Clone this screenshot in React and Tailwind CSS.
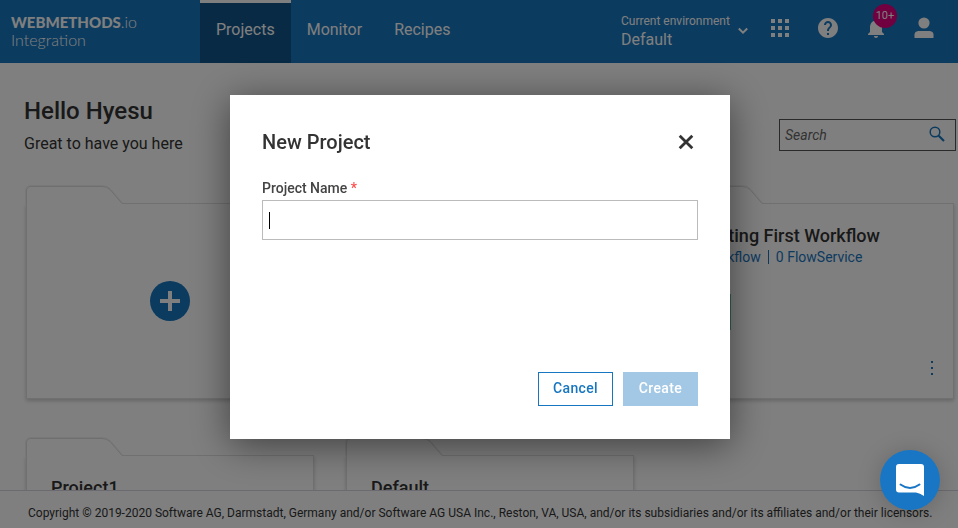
import React from "react";

const projects = [
  { name: "Creating First Workflow", workflows: "1 Workflow", services: "0 FlowService" },
  { name: "Project1" },
  { name: "Default" },
];

function FolderCard({ children }) {
  return (
    <li className="flex h-[213px] w-72 flex-col">
      <svg className="relative -mb-px block shrink-0 overflow-visible" width="97" height="18" viewBox="0 0 97 18" aria-hidden="true">
        <path d="M-.5 18V5Q-.5 -.5 5 -.5H76Q82 -.5 85 3.500L97 17.500" fill="none" stroke="#f0f0f0" />
        <path d="M0 18V5Q0 .5 5 .5H76Q81 .5 84 3.500L96 17.500V18Z" fill="#fff" />
        <path d="M.5 18V5Q.5 .5 5 .5H76Q81 .5 84 3.500L96 17.500" fill="none" stroke="#dedede" />
      </svg>
      <div className="flex flex-1 flex-col border border-[#e0e0e0] bg-white px-6 py-5 shadow-[0_2px_4px_rgba(0,0,0,0.2)] [clip-path:polygon(-8px_1px,96px_1px,96px_0,300px_0,300px_210px,-8px_210px)]">
        {children}
      </div>
    </li>
  );
}

function ProjectCard({ project }) {
  return (
    <FolderCard>
      <h2 className="text-lg/6 font-medium text-[#333]">{project.name}</h2>
      {project.workflows && (
        <>
          <p className="flex items-center gap-[7px] text-sm/[18px] text-[#1776bf]">
            <span>{project.workflows}</span>
            <span className="h-3.5 w-px bg-[#1776bf]" />
            <span>{project.services}</span>
          </p>
          <span className="mt-7 h-9 w-10 shrink-0 bg-[#5fc4a4]" />
          <button type="button" aria-label="More options" className="-mr-1.5 mt-auto self-end text-[#1776bf]">
            <svg width="6" height="20" viewBox="0 0 6 20" fill="currentColor" aria-hidden="true">
              <path d="M2 3h2v2H2zM2 9h2v2H2zM2 15h2v2H2z" />
            </svg>
          </button>
        </>
      )}
    </FolderCard>
  );
}

function Header() {
  return (
    <header className="flex h-[63px] shrink-0 bg-[#1776bf] text-white">
      <a href="#home" className="w-[200px] pl-[11px] pt-[13px] font-['Lato',sans-serif] text-base/[18px]">
        <span className="block">
          <span className="text-[15px] font-black">WEBMETHODS</span>
          <span className="font-light">.io</span>
        </span>
        <span className="block font-light">Integration</span>
      </a>
      <nav className="flex text-base">
        <a href="#projects" className="border-t-3 border-white bg-[#10558b] px-4 pt-[15px]">Projects</a>
        <a href="#monitor" className="px-4 pt-[18px]">Monitor</a>
        <a href="#recipes" className="px-4 pt-[18px]">Recipes</a>
      </nav>
      <div className="ml-auto flex pr-2.5">
        <div className="relative mr-2 w-[127px] pt-3">
          <label htmlFor="environment" className="block text-xs/[18px]">Current environment</label>
          <select id="environment" className="block w-full appearance-none text-base/5">
            <option>Default</option>
          </select>
          <svg className="pointer-events-none absolute right-0 top-[27px]" width="10" height="8" viewBox="0 0 10 8" fill="none" stroke="currentColor" strokeWidth="2" aria-hidden="true">
            <path d="M.8 1.500L5 5.700L9.200 1.500" />
          </svg>
        </div>
        <button type="button" aria-label="Apps" className="flex h-14 w-12 items-center justify-center">
          <svg width="20" height="20" viewBox="0 0 20 20" fill="currentColor" aria-hidden="true">
            <path d="M1 1h4v4H1zM8 1h4v4H8zM15 1h4v4h-4zM1 8h4v4H1zM8 8h4v4H8zM15 8h4v4h-4zM1 15h4v4H1zM8 15h4v4H8zM15 15h4v4h-4z" />
          </svg>
        </button>
        <button type="button" aria-label="Help" className="flex h-14 w-12 items-center justify-center">
          <svg width="24" height="24" viewBox="0 0 24 24" fill="currentColor" aria-hidden="true">
            <path d="M12 2C6.480 2 2 6.480 2 12s4.480 10 10 10 10-4.480 10-10S17.520 2 12 2zm1 17h-2v-2h2v2zm2.070-7.750l-.9.920C13.450 12.900 13 13.500 13 15h-2v-.5c0-1.100.450-2.100 1.170-2.830l1.240-1.260c.370-.360.590-.860.590-1.410 0-1.100-.9-2-2-2s-2 .9-2 2H8c0-2.210 1.790-4 4-4s4 1.790 4 4c0 .880-.360 1.680-.930 2.250z" />
          </svg>
        </button>
        <button type="button" aria-label="Notifications" className="relative flex h-14 w-12 items-center justify-center">
          <svg width="24" height="24" viewBox="0 0 24 24" fill="currentColor" aria-hidden="true">
            <path d="M12 22c1.100 0 2-.9 2-2h-4c0 1.100.890 2 2 2zm6-6v-5c0-3.070-1.640-5.640-4.500-6.320V4c0-.830-.670-1.500-1.500-1.500s-1.500.670-1.500 1.500v.680C7.630 5.360 6 7.920 6 11v5l-2 2v1h16v-1l-2-2z" />
          </svg>
          <span className="absolute left-[21px] top-1 flex h-6 w-6 items-center justify-center rounded-full bg-[#e0007f] text-[11px]/4">10+</span>
        </button>
        <button type="button" aria-label="Account" className="flex h-14 w-12 items-center justify-center">
          <svg width="20" height="22" viewBox="0 0 20 22" fill="currentColor" aria-hidden="true">
            <circle cx="10" cy="6" r="5.600" />
            <path d="M.5 21v-3.500C.5 15 3 14 5 14h10c2 0 4.500 1 4.500 3.500V21z" />
          </svg>
        </button>
      </div>
    </header>
  );
}

function NewProjectDialog() {
  return (
    <div className="fixed inset-0 z-10 flex items-center justify-center bg-black/50 pl-0.5 pt-1.5">
      <form role="dialog" aria-modal="true" aria-labelledby="dialog-title" className="flex h-[344px] w-[500px] flex-col bg-white px-8 pb-[33px] pt-[31px] shadow-[0_6px_36px_rgba(0,0,0,0.5)]">
        <div className="flex h-8 items-center justify-between">
          <h2 id="dialog-title" className="text-xl font-medium text-[#333]">New Project</h2>
          <button type="button" aria-label="Close" className="mr-1 text-[#333]">
            <svg width="16" height="16" viewBox="0 0 16 16" fill="none" stroke="currentColor" strokeWidth="2.800" aria-hidden="true">
              <path d="M1.700 1.700L14.300 14.300M14.300 1.700L1.700 14.300" />
            </svg>
          </button>
        </div>
        <label htmlFor="project-name" className="mt-5 text-sm/5 font-medium text-[#444]">
          Project Name <span className="text-[#ff4d4d]">*</span>
        </label>
        <div className="mt-0.5 flex h-10 items-center border border-[#bbb] pl-1.5">
          <span className="h-[17px] w-px bg-black" />
          <input id="project-name" type="text" className="h-full flex-1 text-sm outline-none" />
        </div>
        <div className="mt-auto flex justify-end gap-2.5 text-sm font-medium tracking-wide">
          <button type="button" className="h-[34px] w-[75px] border border-[#1776bf] pb-0.5 text-[#1776bf]">Cancel</button>
          <button type="submit" disabled className="h-[34px] w-[75px] bg-[#a3c8e5] pb-0.5 text-white">Create</button>
        </div>
      </form>
    </div>
  );
}

export default function App() {
  return (
    <div className="flex h-screen flex-col overflow-hidden bg-white font-['Roboto',sans-serif] text-[#333]">
      <Header />
      <main className="flex-1 overflow-hidden pl-6 pr-0.5 pt-8">
        <div className="flex items-start justify-between">
          <div>
            <h1 className="text-2xl/8 font-medium">Hello Hyesu</h1>
            <p className="mt-1 text-base/[26px]">Great to have you here</p>
          </div>
          <label className="mt-6 flex h-8 w-[177px] items-center border border-[#555] pl-[5px] pr-2">
            <input type="search" aria-label="Search" placeholder="Search" className="min-w-0 flex-1 text-sm italic outline-none placeholder:text-[#666]" />
            <svg width="20" height="20" viewBox="0 0 20 20" fill="none" stroke="#1776bf" aria-hidden="true">
              <circle cx="8" cy="7" r="4.800" strokeWidth="1.500" />
              <path d="M11.700 10.700L17 16" strokeWidth="2.200" />
            </svg>
          </label>
        </div>
        <ul className="mt-[29px] grid grid-cols-[repeat(auto-fill,288px)] gap-x-8 gap-y-[39px] px-0.5">
          <FolderCard>
            <button type="button" aria-label="Add project" className="mx-auto mt-[57px] flex h-10 w-10 items-center justify-center rounded-full bg-[#1776bf] text-white">
              <svg width="20" height="20" viewBox="0 0 20 20" fill="none" stroke="currentColor" strokeWidth="4" aria-hidden="true">
                <path d="M10 0V20M0 10H20" />
              </svg>
            </button>
          </FolderCard>
          <FolderCard />
          {projects.map((project) => (
            <ProjectCard key={project.name} project={project} />
          ))}
        </ul>
      </main>
      <footer className="shrink-0 border-t border-[#d5d5e0] pb-1.5 pl-7 pr-4 pt-[13px] text-xs/[18px]">
        Copyright © 2019-2020 Software AG, Darmstadt, Germany and/or Software AG USA Inc., Reston, VA, USA, and/or its subsidiaries and/or its affiliates and/or their licensors.
      </footer>
      <NewProjectDialog />
      <button type="button" aria-label="Open chat" className="fixed bottom-[18px] right-[18px] z-20 flex h-[60px] w-[60px] items-center justify-center rounded-full bg-[#1976c5] shadow-[0_2px_24px_rgba(0,0,0,0.2)]">
        <svg width="28" height="32" viewBox="0 0 28 32" aria-hidden="true">
          <path d="M3 0H25Q28 0 28 3V32Q24 29 20 28.500H3Q0 28.500 0 25.500V3Q0 0 3 0Z" fill="#fff" />
          <path d="M4.500 20.500Q14 27.500 23.500 20.500" fill="none" stroke="#1976c5" strokeWidth="2" strokeLinecap="round" />
        </svg>
      </button>
    </div>
  );
}
